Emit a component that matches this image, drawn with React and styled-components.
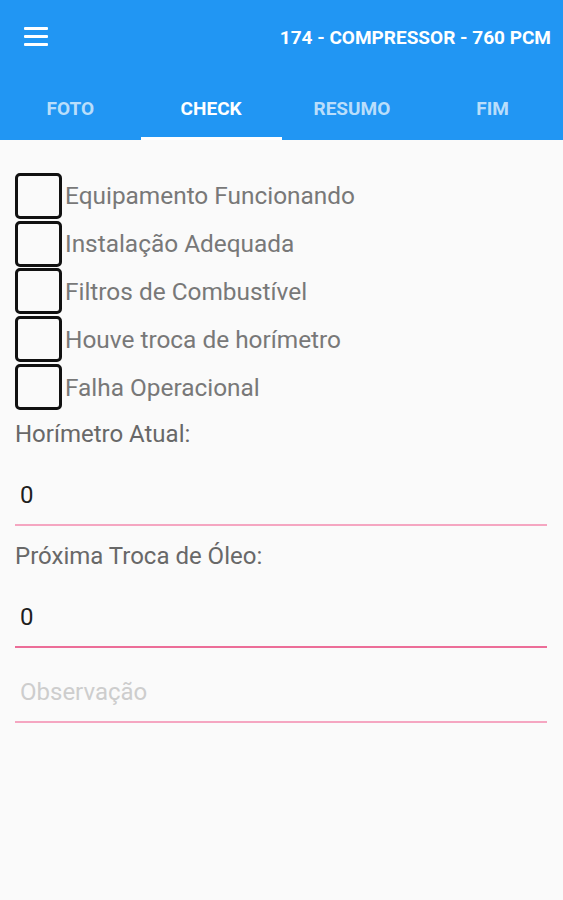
import React, { useState } from 'react'
import styled, { createGlobalStyle } from 'styled-components'

const GlobalStyle = createGlobalStyle`
body {
    margin: 0;
    background: #fafafa;
    font-family: Roboto, "Noto Sans", Arial, sans-serif;
}
* { box-sizing: border-box; }
`

const tabs = ['FOTO', 'CHECK', 'RESUMO', 'FIM']
const checks = [
    'Equipamento Funcionando',
    'Instalação Adequada',
    'Filtros de Combustível',
    'Houve troca de horímetro',
    'Falha Operacional',
]

function App() {
    const [active, setActive] = useState(1)
    const [marked, setMarked] = useState({})

    return (
        <Page>
            <GlobalStyle />
            <Header>
                <Toolbar>
                    <MenuButton aria-label="menu">
                        <span /><span /><span />
                    </MenuButton>
                    <Title>174 - COMPRESSOR - 760 PCM</Title>
                </Toolbar>
                <Tabs>
                    {tabs.map((t, i) => (
                        <Tab key={t} $active={i === active} onClick={() => setActive(i)}>
                            {t}
                        </Tab>
                    ))}
                </Tabs>
            </Header>
            <Content>
                <CheckList>
                    {checks.map((c) => (
                        <CheckRow key={c} onClick={() => setMarked({ ...marked, [c]: !marked[c] })}>
                            <Box $on={marked[c]} />
                            <CheckLabel>{c}</CheckLabel>
                        </CheckRow>
                    ))}
                </CheckList>
                <FieldLabel $top={9}>Horímetro Atual:</FieldLabel>
                <Input defaultValue="0" $line="#f5a6c1" />
                <FieldLabel $top={16}>Próxima Troca de Óleo:</FieldLabel>
                <Input defaultValue="0" $line="#ec6d98" />
                <Input placeholder="Observação" $line="#f5a6c1" $top={30} />
            </Content>
        </Page>
    )
}

export default App

const Page = styled.div`
min-height: 900px;
background: #fafafa;
`
const Header = styled.div`
background: #2196f3;
color: #fff;
`
const Toolbar = styled.div`
height: 76px;
display: flex;
align-items: center;
justify-content: space-between;
padding: 0 12px 0 24px;
`
const MenuButton = styled.div`
width: 24px;
display: flex;
flex-direction: column;
gap: 5px;
margin-top: -4px;
span {
    display: block;
    height: 3px;
    background: #fff;
    border-radius: 1px;
}
`
const Title = styled.div`
font-size: 19px;
font-weight: 700;
margin-top: -2px;
`
const Tabs = styled.div`
display: grid;
grid-template-columns: repeat(4, 1fr);
height: 64px;
`
const Tab = styled.div`
display: flex;
align-items: center;
justify-content: center;
padding-top: 4px;
font-size: 19px;
font-weight: 700;
cursor: pointer;
color: ${p => p.$active ? '#fff' : 'rgba(255,255,255,0.7)'};
border-bottom: 3px solid ${p => p.$active ? '#fff' : 'transparent'};
`
const Content = styled.div`
padding: 32px 16px 0 15px;
`
const CheckList = styled.div`
display: flex;
flex-direction: column;
`
const CheckRow = styled.div`
height: 47.8px;
display: flex;
align-items: center;
gap: 3px;
cursor: pointer;
`
const Box = styled.div`
width: 47px;
height: 46px;
border: 3px solid #111;
border-radius: 5px;
background: ${p => p.$on ? '#2196f3' : 'transparent'};
`
const CheckLabel = styled.span`
font-size: 24.4px;
color: #787878;
`
const FieldLabel = styled.div`
font-size: 24px;
line-height: 28px;
color: #686868;
margin-top: ${p => p.$top}px;
`
const Input = styled.input`
display: block;
width: 100%;
margin-top: ${p => p.$top || 33}px;
padding: 0 0 14px 5px;
border: none;
border-bottom: 2px solid ${p => p.$line};
background: transparent;
font-family: inherit;
font-size: 24px;
line-height: 28px;
height: 45px;
color: #1e1e1e;
outline: none;
&::placeholder {
    color: #cdcdcd;
}
`
